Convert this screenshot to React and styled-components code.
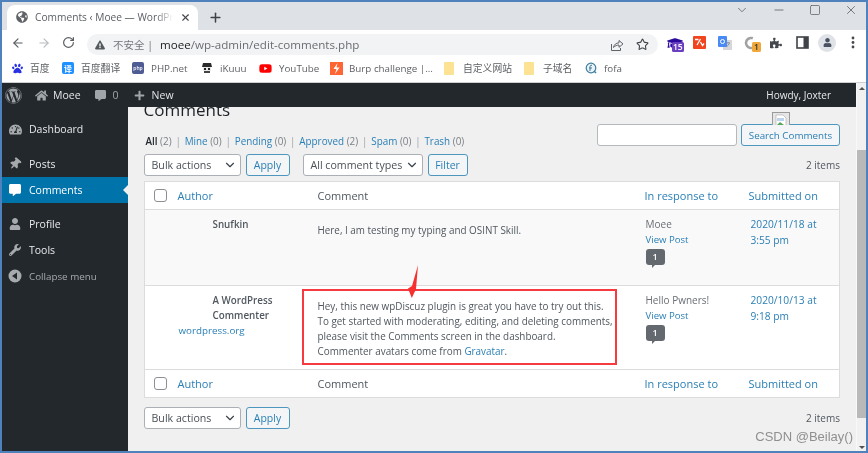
import React from "react";
import styled, { createGlobalStyle } from "styled-components";
import { ArrowLeft, ArrowRight, RotateCw, Star, X, Plus, Minus, Square, ChevronDown } from "lucide-react";
import { FaWordpress, FaHome, FaCommentAlt, FaPlus, FaTachometerAlt, FaThumbtack, FaUser, FaWrench, FaYoutube, FaPuzzlePiece, FaPaw, FaGlobeAmericas, FaExclamationTriangle, FaGraduationCap } from "react-icons/fa";

const Global = createGlobalStyle`
  html, body { margin: 0; padding: 0; width: 868px; height: 453px; overflow: hidden; background: #fff; }
  * { box-sizing: border-box; }
  body { font-family: "Open Sans", "Noto Sans CJK SC", sans-serif; font-size: 10.5px; color: #50575e; }
`;

const Frame = styled.div`
  position: relative; width: 868px; height: 453px; border: 2px solid #4f81bd;
  display: flex; flex-direction: column; overflow: hidden; background: #fff; filter: blur(0.3px);
`;

/* browser chrome */
const TabStrip = styled.div`
  height: 28px; background: #dee1e6; display: flex; align-items: flex-end; padding-left: 5px; color: #45494e; flex: none;
`;
const Tab = styled.div`
  width: 191px; height: 25px; background: #fff; border-radius: 8px 8px 0 0; display: flex; align-items: center;
  padding: 0 7px 1px 9px; gap: 7px; font-size: 10.2px; color: #5a5e63; white-space: nowrap;
`;
const TabTitle = styled.span`
  flex: 1; overflow: hidden;
  -webkit-mask-image: linear-gradient(to right, #000 88%, transparent);
  mask-image: linear-gradient(to right, #000 88%, transparent);
`;
const NewTab = styled.div`
  margin: 0 0 2px 10px; height: 22px; display: flex; align-items: center;
`;
const WindowButtons = styled.div`
  margin-left: auto; align-self: flex-start; display: flex; align-items: center; height: 16px; padding-right: 8px; gap: 23px; color: #55585c;
`;
const Toolbar = styled.div`
  height: 25px; display: flex; align-items: center; padding: 0 9px; background: #fff; color: #5f6368; flex: none;
`;
const NavButton = styled.div`
  width: 25.5px; display: flex; color: ${p => p.$off ? "#b9bbbe" : "#5a5d61"};
`;
const Omnibox = styled.div`
  margin-left: -0.5px; width: 571px; height: 21px; align-self: flex-end; border-radius: 11px; background: #f1f3f4; display: flex; align-items: center;
  padding: 0 8px; font-size: 11.6px; color: #6a6d71; flex: none;
`;
const Insecure = styled.span`
  margin-left: 8px; font-size: 10.5px; color: #74777b; margin-right: 7px;
`;
const Host = styled.span` color: #202124; `;
const OmniActions = styled.div`
  margin-left: auto; display: flex; gap: 12px; color: #5f6368; align-items: center; padding-right: 1px;
`;
const Extensions = styled.div`
  margin-left: 9px; display: flex; align-items: center; height: 24px; flex: 1;
`;
const ExtSlot = styled.div`
  position: relative; width: ${p => p.$w}px; height: 20px; display: flex; align-items: center; justify-content: flex-start; flex: none;
`;
const ExtBadge = styled.span`
  position: absolute; left: ${p => p.$l}px; top: 9px; height: 10px; min-width: 9px; padding: 0 1px; border-radius: 1.5px; background: ${p => p.$bg};
  color: ${p => p.$fg || "#fff"}; font-size: 8.5px; line-height: 10px; text-align: center; font-weight: 600;
`;
const Avatar = styled.span`
  width: 18px; height: 18px; border-radius: 50%; background: #dfe2e7; display: flex; align-items: center; justify-content: center; color: #4a5160;
`;
const Bookmarks = styled.div`
  height: 28px; display: flex; align-items: center; padding: 0 0 1px 10px; background: #fff; border-bottom: 1px solid #cfcfcf;
  font-size: 9.8px; color: #5c5f63; flex: none;
`;
const Bookmark = styled.div`
  width: ${p => p.$w}px; display: flex; align-items: center; gap: ${p => p.$gap || 7}px; white-space: nowrap; flex: none;
`;
const IconSquare = styled.span`
  width: 12px; height: 12px; border-radius: 2px; background: ${p => p.$bg}; color: #fff; display: flex; align-items: center; justify-content: center;
  font-size: ${p => p.$fs || 8}px; font-weight: 600; overflow: hidden; flex: none;
`;
const FolderIcon = styled.span`
  width: 10px; height: 13px; background: #fde293; border-radius: 1px; flex: none;
`;

/* WordPress */
const Browser = styled.div` flex: 1; min-height: 0; display: flex; `;
const Page = styled.div` flex: 1; min-width: 0; display: flex; flex-direction: column; `;
const ScrollBar = styled.div`
  width: 10px; background: #f1f1f1; display: flex; flex-direction: column; align-items: stretch; border-left: 1px solid #f8f8f8; flex: none;
`;
const ScrollArrow = styled.div`
  height: 11px; display: flex; align-items: center; justify-content: center; margin-top: ${p => p.$mt || 0}px; flex: none;
  &::before { content: ""; border-left: 3px solid transparent; border-right: 3px solid transparent;
    ${p => p.$up ? "border-bottom: 3px solid #505050;" : "border-top: 3px solid #505050;"} }
`;
const ScrollThumb = styled.div` height: 268px; margin-top: 56px; background: #b9b9b9; flex: none; `;
const AdminBar = styled.div`
  height: 24px; background: #23282d; color: #e6e8ea; display: flex; align-items: center; font-size: 10.5px; flex: none; padding-left: 3px;
`;
const BarItem = styled.div`
  display: flex; align-items: center; gap: ${p => p.$gap || 5}px; margin-left: ${p => p.$ml || 0}px; color: ${p => p.$c || "#e4e6e8"};
`;
const BarIcon = styled.span` display: flex; color: #a0a5aa; `;
const BarRight = styled.div` margin-left: auto; padding-right: 25px; font-size: 10px; `;
const Body = styled.div` flex: 1; min-height: 0; display: flex; `;
const Sidebar = styled.nav`
  width: 126px; background: #23282d; padding-top: 9px; flex: none; color: #e8eaec;
`;
const MenuItem = styled.div`
  position: relative; height: 26px; display: flex; align-items: center; gap: 7px; padding-left: 6px; margin-top: ${p => p.$mt || 0}px;
  background: ${p => p.$active ? "#0073aa" : "transparent"}; color: ${p => p.$dim ? "#a7aaad" : p.$active ? "#fff" : "#e8eaec"};
  font-size: ${p => p.$dim ? "9.8px" : "10.5px"};
  ${p => p.$active ? `&::after { content: ""; position: absolute; right: 0; top: 8px; border: 5px solid transparent; border-right-color: #f0f0f1; border-left-width: 0; }` : ""}
`;
const MenuIcon = styled.span`
  width: 14px; display: flex; justify-content: center; color: ${p => p.$active ? "#fff" : "#a7aaad"};
  transform: rotate(${p => p.$rot || 0}deg);
`;
const Main = styled.main`
  flex: 1; min-width: 0; background: #f0f0f1; padding: 0 16px 0 15.5px; overflow: hidden; color: #50575e;
`;
const Heading = styled.h1`
  margin: -9px 0 0; font-size: 17px; line-height: 24px; font-weight: 400; color: #1d2327;
`;
const TopRow = styled.div`
  display: flex; justify-content: space-between; align-items: flex-end; height: 23px; margin-top: 1px;
`;
const SubNav = styled.div`
  display: flex; gap: 3.8px; padding: 0 0 0 2px; margin-bottom: -2px; font-size: 9.9px; line-height: 14px; color: #7a7f84;
`;
const SubLink = styled.a`
  color: ${p => p.$on ? "#23282d" : "#2a7fb5"}; font-weight: ${p => p.$on ? 600 : 400};
`;
const Sep = styled.span` color: #a0a5aa; `;
const SearchGroup = styled.div` display: flex; gap: 4px; `;
const SearchInput = styled.div`
  width: 140px; height: 22px; background: #fff; border: 1px solid #b4b9be; border-radius: 3px;
`;
const Button = styled.div`
  height: 22px; border: 1px solid #4d97bf; border-radius: 3px; background: #f3f5f6; color: #2a7fb5; display: flex; align-items: center; justify-content: center;
  width: ${p => p.$w}px; font-size: ${p => p.$fs || 10.5}px; margin-left: ${p => p.$ml || 0}px;
`;
const ActionRow = styled.div`
  display: flex; align-items: center; margin-top: ${p => p.$mt}px; height: 22px;
`;
const Select = styled.div`
  width: ${p => p.$w}px; height: 22px; border: 1px solid #aab0b5; border-radius: 3px; background: #fff; color: #4a5056; display: flex; align-items: center;
  justify-content: space-between; padding: 0 3px 0 7px; font-size: 10.65px; margin-left: ${p => p.$ml || 0}px; white-space: nowrap;
`;
const Count = styled.span` margin-left: auto; font-size: 10px; color: #50575e; `;
const Table = styled.div`
  margin-top: 5px; border: 1px solid #dcdcde; background: #fff;
`;
const Row = styled.div`
  display: grid; grid-template-columns: 33px 140px 327px 104px 1fr; min-height: ${p => p.$h}px;
  background: ${p => p.$alt ? "#f9f9f9" : "#fff"}; border-bottom: ${p => p.$flat ? "0" : "1px solid #dcdcde"};
  align-items: ${p => p.$head ? "center" : "start"};
`;
const CheckCell = styled.div` padding-left: 9px; display: flex; `;
const Check = styled.span`
  width: 13px; height: 13px; border: 1px solid #8c8f94; border-radius: 3px; background: #fff;
`;
const HeadLink = styled.span` color: #2a7fb5; font-size: 11px; `;
const HeadText = styled.span` color: #50575e; font-size: 11px; `;
const AuthorCell = styled.div` padding-top: 7px; line-height: 15.2px; font-size: 9.8px; `;
const AuthorName = styled.div` padding-left: 35px; font-weight: 600; color: #50575e; width: 115px; `;
const AuthorLink = styled.a` display: block; color: #2a7fb5; padding-left: 1px; `;
const CommentCell = styled.div` padding-top: 13px; line-height: 15px; font-size: 9.9px; color: #50575e; white-space: nowrap; `;
const InlineLink = styled.a` color: #2a7fb5; `;
const ResponseCell = styled.div` padding: 7px 0 0 1px; line-height: 15px; font-size: 10px; color: #6a6f74; `;
const ViewLink = styled.a` display: block; color: #2a7fb5; font-size: 9.6px; `;
const Bubble = styled.div`
  position: relative; width: 19px; height: 16px; margin-top: 2px; border-radius: 3px; background: #646970; color: #fff; font-size: 9px; line-height: 16px; text-align: center; font-weight: 600;
  &::after { content: ""; position: absolute; left: 6px; bottom: -3px; border-top: 3px solid #646970; border-right: 3px solid transparent; }
`;
const DateCell = styled.div` padding: 7px 0 0 2px; line-height: 15.6px; font-size: 10.2px; color: #2a7fb5; `;

/* annotation overlays */
const RedBox = styled.div`
  position: absolute; left: 300px; top: 287px; width: 315px; height: 76px; border: 2px solid #f63a3f; pointer-events: none;
`;
const Overlay = styled.svg` position: absolute; left: 405px; top: 262px; `;
const Watermark = styled.div`
  position: absolute; right: 13px; bottom: 6px; font-family: "Liberation Sans", sans-serif; font-size: 13px; color: #8f8f8f; line-height: 16px;
`;
const BrokenImage = styled.svg` position: absolute; left: 770px; top: 110px; `;

const Subs = [["Mine","(0)"],["Pending","(0)"],["Approved","(2)"],["Spam","(0)"],["Trash","(0)"]];

function ShareIcon() {
  return (
    <svg width="14" height="14" viewBox="0 0 14 14" fill="none" stroke="#5f6368" strokeWidth="1">
      <path d="M1.5 6v6.5h9V10" />
      <path d="M3.5 9.5C4 6.5 6 5 9 4.8V2.5l4 3.4-4 3.4V7C7 7 5 7.8 3.5 9.5z" />
    </svg>
  );
}
function RedExtIcon() {
  return (
    <svg width="13" height="13" viewBox="0 0 13 13">
      <rect width="13" height="13" rx="1" fill="#f0451e" />
      <path d="M2 3.5h3.5M4 9l3.5-6M7.5 6l2 3.5L11 7.5" stroke="#fff" strokeWidth="1.3" fill="none" />
    </svg>
  );
}
function TranslateIcon() {
  return (
    <svg width="14" height="14" viewBox="0 0 14 14">
      <rect x="5" y="4" width="9" height="10" fill="#d5d7da" />
      <path d="M8 7h4M10 6v1M8.5 11l3-3.5" stroke="#7b7f84" strokeWidth="0.8" fill="none" />
      <rect width="9" height="11" rx="1" fill="#4a8af4" />
      <circle cx="4.5" cy="5.5" r="2" fill="none" stroke="#fff" strokeWidth="1" />
    </svg>
  );
}
function RingIcon() {
  return (
    <svg width="14" height="14" viewBox="0 0 14 14">
      <circle cx="7" cy="7" r="5" fill="none" stroke="#a2a2a2" strokeWidth="2.6" strokeDasharray="24 8" transform="rotate(10 7 7)" />
    </svg>
  );
}
function PanelIcon() {
  return (
    <svg width="13" height="13" viewBox="0 0 13 13"><rect x="1" y="1" width="11" height="11" fill="none" stroke="#3f4347" strokeWidth="1.6" /><rect x="7.5" y="1" width="4.5" height="11" fill="#3f4347" /></svg>
  );
}
function DotsIcon() {
  return (
    <svg width="4" height="13" viewBox="0 0 4 13"><circle cx="2" cy="2" r="1.4" fill="#45494e" /><circle cx="2" cy="6.5" r="1.4" fill="#45494e" /><circle cx="2" cy="11" r="1.4" fill="#45494e" /></svg>
  );
}
function FofaIcon() {
  return (
    <svg width="12" height="12" viewBox="0 0 12 12" style={{ flex: "none" }}><circle cx="6" cy="6" r="4.8" fill="#eaf3f7" stroke="#3f7d9c" strokeWidth="1.2" /><path d="M5 9V4.5q0-1.5 2-1.3M4 6h3" fill="none" stroke="#3f7d9c" /><path d="M9 9l2 2" stroke="#3f7d9c" strokeWidth="1.4" /></svg>
  );
}
function KuuuIcon() {
  return (
    <svg width="12" height="12" viewBox="0 0 12 12" style={{ flex: "none" }}>
      <path d="M2 1h8l1 4H1z" fill="#2b2b2b" />
      <rect x="2" y="5" width="8" height="4" fill="#e8e8e8" />
      <rect x="3" y="6" width="2" height="2" fill="#222" /><rect x="7" y="6" width="2" height="2" fill="#222" />
      <path d="M3 9h6v2H3z" fill="#444" />
    </svg>
  );
}
function BurpIcon() {
  return (
    <svg width="13" height="13" viewBox="0 0 13 13" style={{ flex: "none" }}>
      <rect width="13" height="13" fill="#ff6633" />
      <path d="M7.5 1L3.5 7h3l-1.5 5 4.5-6.5h-3z" fill="#fff" />
    </svg>
  );
}
function CollapseIcon() {
  return (
    <svg width="14" height="14" viewBox="0 0 14 14"><circle cx="7" cy="7" r="6.5" fill="#a7aaad" /><path d="M9 3.5v7L4 7z" fill="#23282d" /></svg>
  );
}

function ActionBar({ top, second }) {
  return (
    <ActionRow $mt={top}>
      <Select $w={97}>Bulk actions<ChevronDown size={14} strokeWidth={2} color="#3c434a" /></Select>
      <Button $w={44} $ml={5}>Apply</Button>
      {second && <Select $w={120} $ml={13}>All comment types<ChevronDown size={14} strokeWidth={2} color="#3c434a" /></Select>}
      {second && <Button $w={40} $ml={5}>Filter</Button>}
      <Count>2 items</Count>
    </ActionRow>
  );
}

function HeaderRow({ foot }) {
  return (
    <Row $h={foot ? 27 : 28} $head $flat={foot}>
      <CheckCell><Check /></CheckCell>
      <HeadLink>Author</HeadLink>
      <HeadText>Comment</HeadText>
      <HeadLink>In response to</HeadLink>
      <HeadLink>Submitted on</HeadLink>
    </Row>
  );
}

export default function App() {
  return (
    <>
      <Global />
      <Frame>
        <TabStrip>
          <Tab>
            <FaGlobeAmericas size={12} color="#5f6368" />
            <TabTitle>Comments ‹ Moee — WordPress</TabTitle>
            <X size={11} strokeWidth={2.5} color="#45494e" />
          </Tab>
          <NewTab><Plus size={15} strokeWidth={2.4} color="#3f4347" /></NewTab>
          <WindowButtons>
            <ChevronDown size={14} strokeWidth={1.3} />
            <Minus size={14} strokeWidth={1.3} />
            <Square size={12} strokeWidth={1.4} />
            <X size={14} strokeWidth={1.3} />
          </WindowButtons>
        </TabStrip>
        <Toolbar>
          <NavButton><ArrowLeft size={14} strokeWidth={2} /></NavButton>
          <NavButton $off><ArrowRight size={14} strokeWidth={2} /></NavButton>
          <NavButton><RotateCw size={13} strokeWidth={2.2} /></NavButton>
          <Omnibox>
            <FaExclamationTriangle size={10} color="#55585c" />
            <Insecure>不安全 |</Insecure>
            <span><Host>moee</Host>/wp-admin/edit-comments.php</span>
            <OmniActions>
              <ShareIcon />
              <Star size={13} strokeWidth={2} color="#3f4347" />
            </OmniActions>
          </Omnibox>
          <Extensions>
            <ExtSlot $w={26}>
              <FaGraduationCap size={16} color="#2d0a9e" />
              <ExtBadge $l={5} $bg="#6a3fc0">15</ExtBadge>
            </ExtSlot>
            <ExtSlot $w={25}><RedExtIcon /></ExtSlot>
            <ExtSlot $w={26}><TranslateIcon /></ExtSlot>
            <ExtSlot $w={26}>
              <RingIcon />
              <ExtBadge $l={8} $bg="#f0a83c" $fg="#333">1</ExtBadge>
            </ExtSlot>
            <ExtSlot $w={26}><FaPuzzlePiece size={12} color="#45494e" /></ExtSlot>
            <ExtSlot $w={22}><PanelIcon /></ExtSlot>
            <ExtSlot $w={33}><Avatar><FaUser size={9} /></Avatar></ExtSlot>
            <ExtSlot $w={6}><DotsIcon /></ExtSlot>
          </Extensions>
        </Toolbar>
        <Bookmarks>
          <Bookmark $w={50}><FaPaw size={11} color="#2932e1" />百度</Bookmark>
          <Bookmark $w={70}><IconSquare $bg="#1e90ff">译</IconSquare>百度翻译</Bookmark>
          <Bookmark $w={69}><IconSquare $bg="#4f5b93" $fs={5}>php</IconSquare>PHP.net</Bookmark>
          <Bookmark $w={58}><KuuuIcon />iKuuu</Bookmark>
          <Bookmark $w={71}><FaYoutube size={13} color="#f00" />YouTube</Bookmark>
          <Bookmark $w={114} $gap={6}><BurpIcon />Burp challenge |...</Bookmark>
          <Bookmark $w={80} $gap={9}><FolderIcon />自定义网站</Bookmark>
          <Bookmark $w={61} $gap={9}><FolderIcon />子域名</Bookmark>
          <Bookmark $w={50}><FofaIcon />fofa</Bookmark>
        </Bookmarks>
        <Browser>
          <Page>
            <AdminBar>
              <BarIcon><FaWordpress size={17} /></BarIcon>
              <BarItem $ml={13}><BarIcon><FaHome size={13} /></BarIcon>Moee</BarItem>
              <BarItem $ml={14} $gap={7} $c="#a0a5aa"><BarIcon><FaCommentAlt size={11} /></BarIcon>0</BarItem>
              <BarItem $ml={15} $gap={7}><BarIcon><FaPlus size={11} /></BarIcon>New</BarItem>
              <BarRight>Howdy, Joxter</BarRight>
            </AdminBar>
            <Body>
              <Sidebar>
                <MenuItem><MenuIcon><FaTachometerAlt size={13} /></MenuIcon>Dashboard</MenuItem>
                <MenuItem $mt={9}><MenuIcon $rot={40}><FaThumbtack size={12} /></MenuIcon>Posts</MenuItem>
                <MenuItem $active><MenuIcon $active><FaCommentAlt size={12} /></MenuIcon>Comments</MenuItem>
                <MenuItem $mt={8}><MenuIcon><FaUser size={12} /></MenuIcon>Profile</MenuItem>
                <MenuItem><MenuIcon><FaWrench size={12} /></MenuIcon>Tools</MenuItem>
                <MenuItem $dim><MenuIcon><CollapseIcon /></MenuIcon>Collapse menu</MenuItem>
              </Sidebar>
              <Main>
                <Heading>Comments</Heading>
                <TopRow>
                  <SubNav>
                    <span><SubLink $on>All</SubLink> (2)</span>
                    {Subs.map(([n, c]) => (
                      <React.Fragment key={n}>
                        <Sep>|</Sep>
                        <span><SubLink>{n}</SubLink> {c}</span>
                      </React.Fragment>
                    ))}
                  </SubNav>
                  <SearchGroup>
                    <SearchInput />
                    <Button $w={99} $fs={9.8}>Search Comments</Button>
                  </SearchGroup>
                </TopRow>
                <ActionBar top={8} second />
                <Table>
                  <HeaderRow />
                  <Row $h={76} $alt>
                    <span />
                    <AuthorCell><AuthorName>Snufkin</AuthorName></AuthorCell>
                    <CommentCell>Here, I am testing my typing and OSINT Skill.</CommentCell>
                    <ResponseCell>Moee<ViewLink>View Post</ViewLink><Bubble>1</Bubble></ResponseCell>
                    <DateCell>2020/11/18 at<br />3:55 pm</DateCell>
                  </Row>
                  <Row $h={84}>
                    <span />
                    <AuthorCell>
                      <AuthorName>A WordPress Commenter</AuthorName>
                      <AuthorLink>wordpress.org</AuthorLink>
                    </AuthorCell>
                    <CommentCell>
                      Hey, this new wpDiscuz plugin is great you have to try out this.<br />
                      To get started with moderating, editing, and deleting comments,<br />
                      please visit the Comments screen in the dashboard.<br />
                      Commenter avatars come from <InlineLink>Gravatar</InlineLink>.
                    </CommentCell>
                    <ResponseCell>Hello Pwners!<ViewLink>View Post</ViewLink><Bubble>1</Bubble></ResponseCell>
                    <DateCell>2020/10/13 at<br />9:18 pm</DateCell>
                  </Row>
                  <HeaderRow foot />
                </Table>
                <ActionBar top={9} />
              </Main>
            </Body>
          </Page>
          <ScrollBar>
            <ScrollArrow $up />
            <ScrollThumb />
            <ScrollArrow $mt={24} />
          </ScrollBar>
        </Browser>
        <RedBox />
        <Overlay width="16" height="38" viewBox="0 0 16 38">
          <polygon points="11,1 9,25 4.8,34 1,24.5 5,22" fill="#f5302f" />
        </Overlay>
        <BrokenImage width="18" height="13" viewBox="0 0 18 13">
          <rect x="0.5" y="0.5" width="17" height="14" fill="#e6e6e6" stroke="#9a9a9a" />
          <path d="M4 3h7l3 3v9H4z" fill="#fff" stroke="#aaa" strokeWidth="0.6" />
          <path d="M5 6h7v3H5z" fill="#bcd3ee" />
          <path d="M5 13l3-3 4 3z" fill="#58a55c" />
        </BrokenImage>
        <Watermark>CSDN @Beilay()</Watermark>
      </Frame>
    </>
  );
}
